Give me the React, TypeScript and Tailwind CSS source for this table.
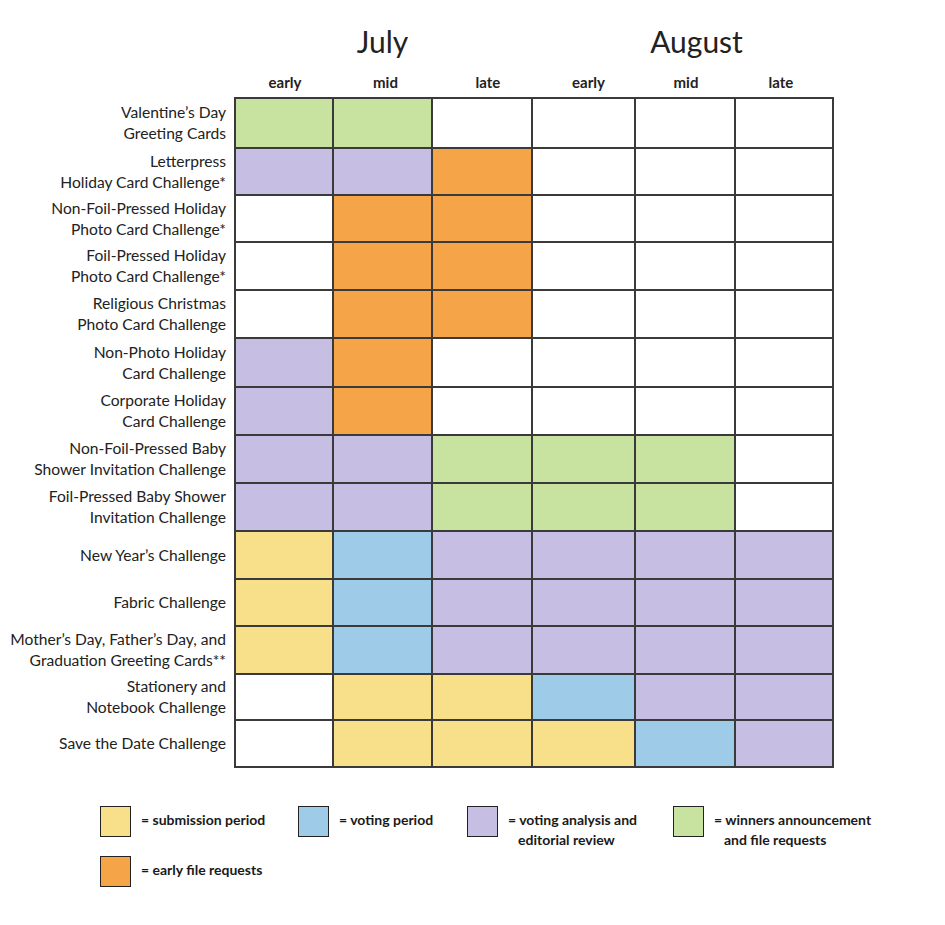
import React from "react";

type C = "G" | "P" | "O" | "Y" | "B" | "W";

const colorClass: Record<C, string> = {
  G: "bg-[#c8e2a0]",
  P: "bg-[#c6bee3]",
  O: "bg-[#f5a447]",
  Y: "bg-[#f8df8a]",
  B: "bg-[#9ecbe8]",
  W: "bg-white",
};

const rows: { label: string[]; cells: C[] }[] = [
  { label: ["Valentine’s Day", "Greeting Cards"], cells: ["G", "G", "W", "W", "W", "W"] },
  { label: ["Letterpress", "Holiday Card Challenge*"], cells: ["P", "P", "O", "W", "W", "W"] },
  { label: ["Non-Foil-Pressed Holiday", "Photo Card Challenge*"], cells: ["W", "O", "O", "W", "W", "W"] },
  { label: ["Foil-Pressed Holiday", "Photo Card Challenge*"], cells: ["W", "O", "O", "W", "W", "W"] },
  { label: ["Religious Christmas", "Photo Card Challenge"], cells: ["W", "O", "O", "W", "W", "W"] },
  { label: ["Non-Photo Holiday", "Card Challenge"], cells: ["P", "O", "W", "W", "W", "W"] },
  { label: ["Corporate Holiday", "Card Challenge"], cells: ["P", "O", "W", "W", "W", "W"] },
  { label: ["Non-Foil-Pressed Baby", "Shower Invitation Challenge"], cells: ["P", "P", "G", "G", "G", "W"] },
  { label: ["Foil-Pressed Baby Shower", "Invitation Challenge"], cells: ["P", "P", "G", "G", "G", "W"] },
  { label: ["New Year’s Challenge"], cells: ["Y", "B", "P", "P", "P", "P"] },
  { label: ["Fabric Challenge"], cells: ["Y", "B", "P", "P", "P", "P"] },
  { label: ["Mother’s Day, Father’s Day, and", "Graduation Greeting Cards**"], cells: ["Y", "B", "P", "P", "P", "P"] },
  { label: ["Stationery and", "Notebook Challenge"], cells: ["W", "Y", "Y", "B", "P", "P"] },
  { label: ["Save the Date Challenge"], cells: ["W", "Y", "Y", "Y", "B", "P"] },
];

const subs = [
  { t: "early", c: "pl-[2px]" },
  { t: "mid", c: "pl-[6px]" },
  { t: "late", c: "pl-[12px]" },
  { t: "early", c: "pl-[10px]" },
  { t: "mid", c: "pl-[2px]" },
  { t: "late", c: "pr-[6px]" },
];

function Legend({ c, lines, className }: { c: C; lines: string[]; className?: string }) {
  return (
    <div className={"flex items-start " + (className ?? "")}>
      <div className={"w-[31px] h-[31px] border-[1.5px] border-[#222] shrink-0 " + colorClass[c]} />
      <div className="ml-[10px] mt-[4px] text-[14px] font-bold leading-[20px] text-[#1a1a1a]">
        <div>= {lines[0]}</div>
        {lines[1] && <div className="pl-[10px]">{lines[1]}</div>}
      </div>
    </div>
  );
}

export default function App() {
  return (
    <div
      className="w-[945px] h-[925px] bg-white text-[#222] relative"
      style={{ fontFamily: "Lato, 'Open Sans', sans-serif" }}
    >
      {/* Month titles */}
      <div className="flex pt-[21px] h-[66px]">
        <div className="w-[235px]" />
        <div className="w-[297px] text-center text-[30px] leading-[40px] pr-[2px]">July</div>
        <div className="w-[301px] text-center text-[30px] leading-[40px] pl-[28px]">August</div>
      </div>
      {/* Sub headers */}
      <div className="flex h-[31px] items-center">
        <div className="w-[235px]" />
        <div className="grid grid-cols-[98px_99px_100px_103px_100px_98px]">
          {subs.map((s, i) => (
            <div key={i} className={"text-center text-[15px] font-bold leading-[20px] " + s.c}>
              {s.t}
            </div>
          ))}
        </div>
      </div>
      {/* Body */}
      <div className="flex">
        <div className="w-[234px] pr-[8px] pt-[2px] grid grid-rows-[48px_45px_45px_46px_46px_47px_46px_46px_46px_46px_45px_46px_44px_45px] gap-y-[2px]">
          {rows.map((r, i) => (
            <div key={i} className="flex flex-col justify-center items-end text-[15.6px] leading-[21px] text-right whitespace-nowrap">
              {r.label.map((l, j) => (
                <div key={j}>{l}</div>
              ))}
            </div>
          ))}
        </div>
        <div className="bg-[#3a3a3a] p-[2px] grid grid-cols-[96px_97px_98px_101px_98px_96px] grid-rows-[48px_45px_45px_46px_46px_47px_46px_46px_46px_46px_45px_46px_44px_45px] gap-[2px]">
          {rows.map((r, i) =>
            r.cells.map((c, j) => <div key={i + "-" + j} className={colorClass[c]} />)
          )}
        </div>
      </div>
      {/* Legend */}
      <div className="pl-[100px] mt-[38px]">
        <div className="flex">
          <Legend c="Y" lines={["submission period"]} className="w-[198px]" />
          <Legend c="B" lines={["voting period"]} className="w-[169px]" />
          <Legend c="P" lines={["voting analysis and", "editorial review"]} className="w-[206px]" />
          <Legend c="G" lines={["winners announcement", "and file requests"]} />
        </div>
        <div className="flex mt-[6px]">
          <Legend c="O" lines={["early file requests"]} />
        </div>
      </div>
    </div>
  );
}
